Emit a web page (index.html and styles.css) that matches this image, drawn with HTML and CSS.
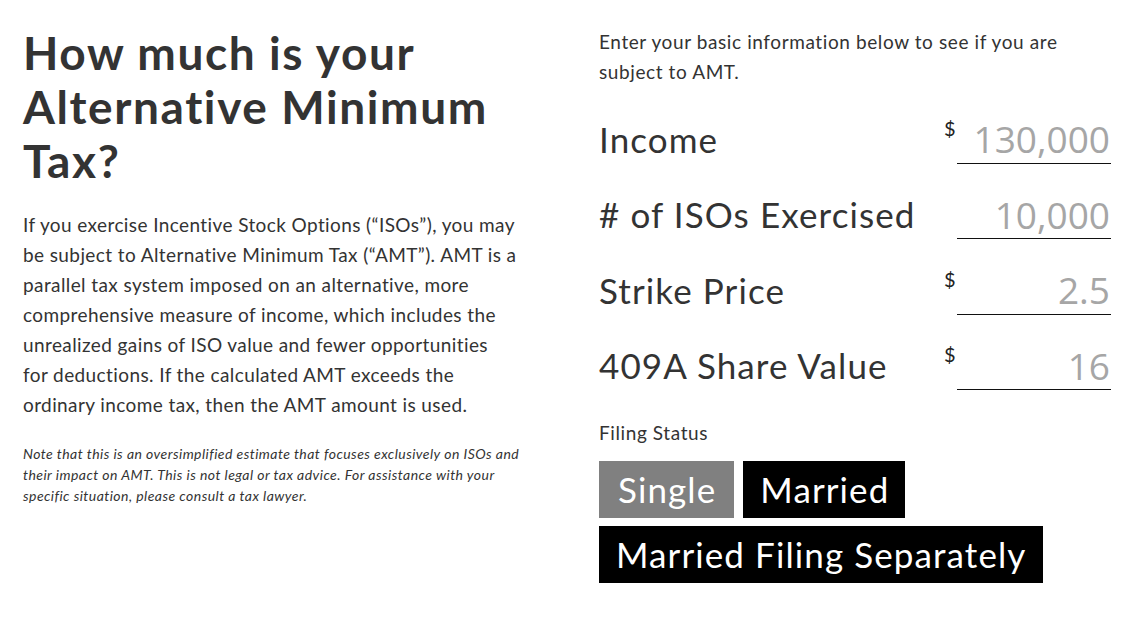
FILE: index.html
```html
<!DOCTYPE html>
<html lang="en">
<head>
<meta charset="utf-8">
<title>AMT Calculator</title>
<link rel="stylesheet" href="styles.css">
</head>
<body>
<main class="page">
  <section class="intro">
    <h1 class="title">How much is your Alternative Minimum Tax?</h1>
    <p class="lead">If you exercise Incentive Stock Options (“ISOs”), you may be subject to Alternative Minimum Tax (“AMT”). AMT is a parallel tax system imposed on an alternative, more comprehensive measure of income, which includes the unrealized gains of ISO value and fewer opportunities for deductions. If the calculated AMT exceeds the ordinary income tax, then the AMT amount is used.</p>
    <p class="note">Note that this is an oversimplified estimate that focuses exclusively on ISOs and their impact on AMT. This is not legal or tax advice. For assistance with your specific situation, please consult a tax lawyer.</p>
  </section>
  <section class="form">
    <p class="form-intro">Enter your basic information below to see if you are subject to AMT.</p>
    <div class="field">
      <label class="field-label">Income</label>
      <div class="field-input">
        <span class="currency">$</span>
        <input class="value" type="text" value="130,000">
      </div>
    </div>
    <div class="field">
      <label class="field-label"># of ISOs Exercised</label>
      <div class="field-input">
        <span class="currency currency-empty"></span>
        <input class="value" type="text" value="10,000">
      </div>
    </div>
    <div class="field">
      <label class="field-label">Strike Price</label>
      <div class="field-input">
        <span class="currency">$</span>
        <input class="value" type="text" value="2.5">
      </div>
    </div>
    <div class="field">
      <label class="field-label">409A Share Value</label>
      <div class="field-input">
        <span class="currency">$</span>
        <input class="value" type="text" value="16">
      </div>
    </div>
    <p class="status-label">Filing Status</p>
    <div class="status-options">
      <button class="status status-active">Single</button>
      <button class="status">Married</button>
      <button class="status">Married Filing Separately</button>
    </div>
  </section>
</main>
</body>
</html>
```

FILE: styles.css
```css
* { box-sizing: border-box; }

body {
  margin: 0;
  background: #fff;
  color: #333;
  font-family: Lato, "Noto Sans", sans-serif;
}

.page {
  display: grid;
  grid-template-columns: 512px 512px;
  column-gap: 64px;
  padding: 0 24px 0 23px;
}

.intro { padding-top: 26px; }

.title {
  margin: 0;
  font-size: 46px;
  line-height: 54px;
  font-weight: 700;
  color: #333;
  letter-spacing: 1.6px;
}

.lead {
  margin: 22px 0 0;
  max-width: 494px;
  font-size: 19px;
  line-height: 30px;
  letter-spacing: 0.4px;
}

.note {
  margin: 23px 0 0;
  max-width: 505px;
  font-size: 14px;
  line-height: 21px;
  font-style: italic;
  letter-spacing: 0.45px;
}

.form { padding-top: 27px; }

.form-intro {
  margin: 0 0 1px;
  font-size: 19px;
  line-height: 30px;
  letter-spacing: 0.6px;
  padding-right: 30px;
}

.field {
  display: flex;
  align-items: flex-end;
  height: 75.6px;
}

.field-label {
  flex: 1;
  font-size: 35px;
  line-height: 40px;
  letter-spacing: 1.1px;
  padding-bottom: 5px;
}

.field-input {
  display: flex;
  align-items: flex-start;
}

.currency {
  width: 13px;
  font-size: 20px;
  line-height: 20px;
  padding-top: 2px;
  color: #222;
}

.value {
  width: 154px;
  border: 0;
  border-bottom: 1.5px solid #111;
  padding: 0 1px 1px 0;
  font-family: "Open Sans", "Noto Sans", sans-serif;
  font-size: 37px;
  line-height: 44px;
  height: 48px;
  color: #a6a6a6;
  text-align: right;
  background: transparent;
  outline: none;
}

.status-label {
  margin: 28px 0 0;
  font-size: 19px;
  line-height: 30px;
  letter-spacing: 0.6px;
}

.status-options {
  display: flex;
  flex-wrap: wrap;
  gap: 8px 9px;
  margin-top: 13px;
  max-width: 470px;
}

.status {
  border: 0;
  background: #000;
  color: #fff;
  font-family: Lato, "Noto Sans", sans-serif;
  font-size: 35px;
  letter-spacing: 1.1px;
  line-height: 57px;
  height: 57px;
  padding: 0 16px 0 17px;
}

.status-active { padding: 0 18px 0 19px; background: #808080; }
```
